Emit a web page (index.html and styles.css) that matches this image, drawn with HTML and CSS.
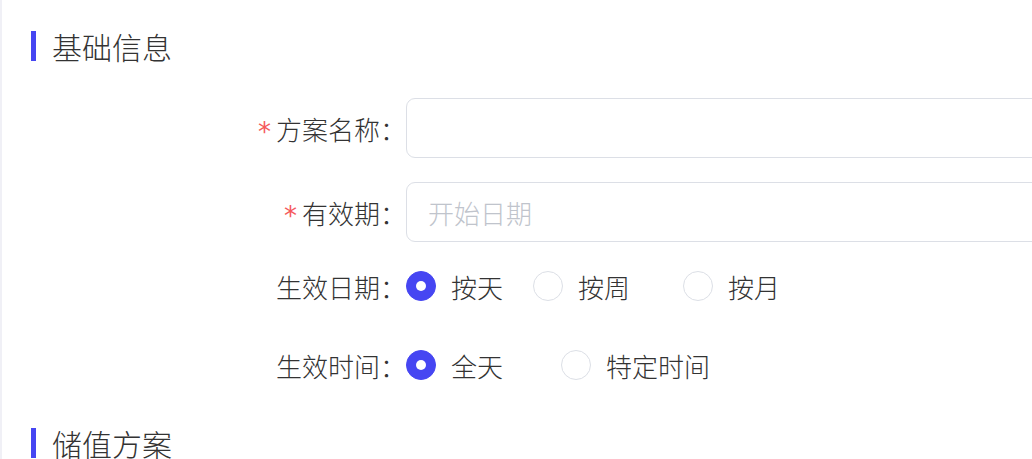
FILE: index.html
```html
<!DOCTYPE html>
<html lang="zh">
<head>
<meta charset="utf-8">
<link rel="stylesheet" href="styles.css">
</head>
<body>
<div class="page">
  <div class="section-title section-title--first"><span class="bar"></span><span class="title-text">基础信息</span></div>
  <div class="form">
    <div class="form-item">
      <label class="form-label"><span class="req">*</span>方案名称：</label>
      <div class="form-control"><div class="input"></div></div>
    </div>
    <div class="form-item">
      <label class="form-label"><span class="req">*</span>有效期：</label>
      <div class="form-control"><div class="input"><span class="placeholder">开始日期</span></div></div>
    </div>
    <div class="form-item form-item--radio form-item--r3">
      <label class="form-label">生效日期：</label>
      <div class="form-control radio-group">
        <label class="radio radio--w127"><span class="radio-circle is-checked"></span><span class="radio-label">按天</span></label>
        <label class="radio radio--w150"><span class="radio-circle"></span><span class="radio-label">按周</span></label>
        <label class="radio"><span class="radio-circle"></span><span class="radio-label">按月</span></label>
      </div>
    </div>
    <div class="form-item form-item--radio form-item--r4">
      <label class="form-label">生效时间：</label>
      <div class="form-control radio-group">
        <label class="radio radio--w155"><span class="radio-circle is-checked"></span><span class="radio-label">全天</span></label>
        <label class="radio"><span class="radio-circle"></span><span class="radio-label">特定时间</span></label>
      </div>
    </div>
  </div>
  <div class="section-title section-title--second"><span class="bar"></span><span class="title-text">储值方案</span></div>
</div>
</body>
</html>
```
FILE: styles.css
```css
html, body {
  margin: 0;
  padding: 0;
  background: #fff;
  overflow: hidden;
}
body {
  font-family: "Noto Sans CJK SC", "Noto Sans", sans-serif;
  font-weight: 300;
  color: #333;
  width: 1032px;
  height: 459px;
}
.page {
  border-left: 2px solid #f0f0f6;
  height: 459px;
  box-sizing: border-box;
  overflow: hidden;
}
.section-title {
  display: flex;
  align-items: center;
  padding-left: 29px;
  height: 30px;
}
.section-title--first { padding-top: 31px; }
.section-title--second { margin-top: 33px; }
.bar {
  flex-shrink: 0;
  width: 5px;
  height: 30px;
  background: #4646f2;
}
.title-text {
  margin-left: 16px;
  font-size: 30px;
  line-height: 30px;
  color: #333;
}
.form {
  margin-top: 37px;
}
.form-item {
  display: flex;
  align-items: center;
  height: 60px;
  margin-bottom: 24px;
}
.form-item--r3 { margin-top: -10px; margin-bottom: 19px; }
.form-label {
  flex-shrink: 0;
  width: 404px;
  box-sizing: border-box;
  text-align: right;
  font-size: 26px;
  color: #333;
  white-space: nowrap;
}
.req {
  display: inline-block;
  color: #f5595c;
  margin-right: 5px;
  font-family: "DejaVu Sans", sans-serif;
  font-weight: 400;
  font-size: 26px;
  line-height: 1;
  vertical-align: -1px;
}
.form-control {
  flex: 1;
  min-width: 0;
}
.input {
  width: 700px;
  height: 60px;
  box-sizing: border-box;
  border: 1px solid #dcdfe6;
  border-radius: 9px;
  display: flex;
  align-items: center;
  padding-left: 21px;
}
.placeholder {
  font-size: 26px;
  color: #c0c4cc;
}
.radio-group {
  display: flex;
  align-items: center;
}
.radio {
  flex-shrink: 0;
  display: flex;
  align-items: center;
}
.radio--w127 { width: 127px; }
.radio--w150 { width: 150px; }
.radio--w155 { width: 155px; }
.radio-circle {
  width: 30px;
  height: 30px;
  box-sizing: border-box;
  border-radius: 50%;
  border: 1px solid #dcdfe6;
  background: #fff;
  position: relative;
}
.radio-circle.is-checked {
  background: #4646f2;
  border-color: #4646f2;
}
.radio-circle.is-checked::after {
  content: "";
  position: absolute;
  left: 50%;
  top: 50%;
  width: 10px;
  height: 10px;
  margin: -5px 0 0 -5px;
  border-radius: 50%;
  background: #fff;
}
.radio-label {
  margin-left: 15px;
  font-size: 26px;
  color: #333;
}
```
